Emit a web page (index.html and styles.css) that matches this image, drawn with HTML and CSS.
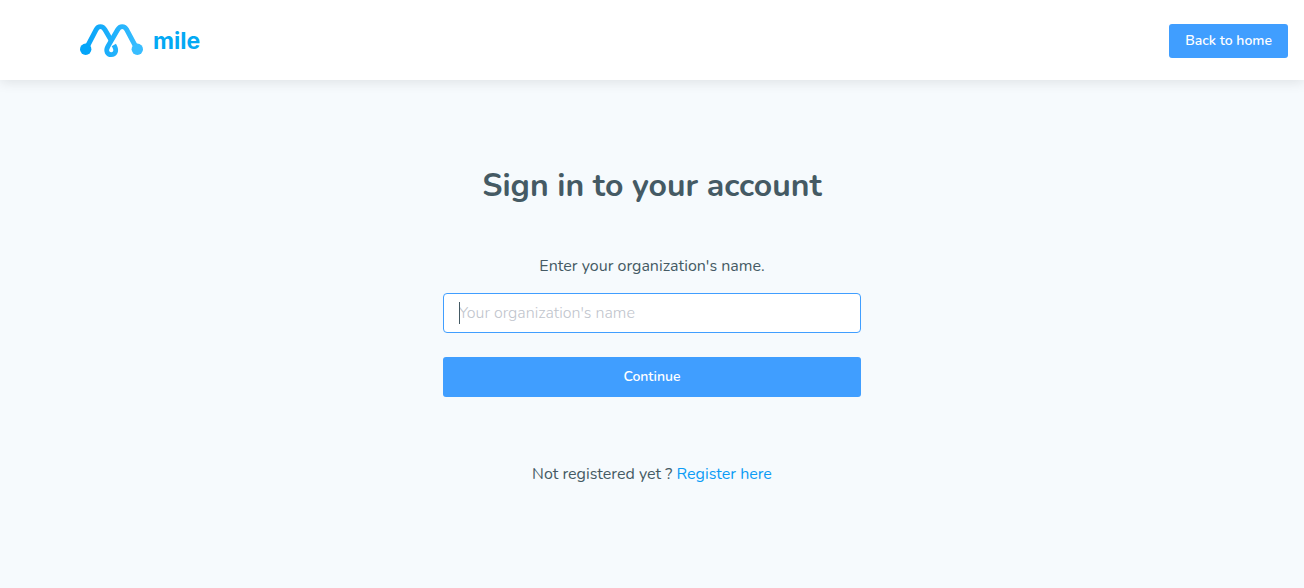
FILE: index.html
```html
<!DOCTYPE html>
<html lang="en">
<head>
<meta charset="utf-8">
<meta name="viewport" content="width=device-width, initial-scale=1">
<title>Sign in - mile</title>
<link rel="stylesheet" href="styles.css">
</head>
<body>
<header class="topbar">
  <a class="brand" href="#">
    <svg class="brand-mark" viewBox="0 1 64 36" aria-hidden="true">
      <defs>
        <linearGradient id="mark" gradientUnits="userSpaceOnUse" x1="0" y1="0" x2="64" y2="0">
          <stop offset="0" stop-color="#03a2f8"/>
          <stop offset="1" stop-color="#3bbfff"/>
        </linearGradient>
      </defs>
      <g fill="none" stroke="url(#mark)" stroke-width="4.9" stroke-linejoin="round">
        <path d="M6 27 L16 7.8 C18.2 3.6 22.6 3.6 25 7.8 L32 19.8"/>
        <path d="M57 27 L46.8 7.8 C44.4 3.6 40 3.6 37.6 7.8 L28 24.2 C25 29.2 27.8 32.6 31.2 32.6 C35.2 32.6 37 28.8 34.6 24.4 L33.8 23"/>
      </g>
      <circle cx="5.7" cy="27.3" r="5.7" fill="#03a5f9"/>
      <circle cx="57.3" cy="27.3" r="5.7" fill="#38bdff"/>
    </svg>
    <span class="brand-name">mile</span>
  </a>
  <button class="button button-home" type="button">Back to home</button>
</header>
<main class="signin">
  <h1 class="title">Sign in to your account</h1>
  <form class="form">
    <label class="label" for="organization">Enter your organization's name.</label>
    <div class="field">
      <input class="input" id="organization" type="text" placeholder="Your organization's name">
      <span class="caret" aria-hidden="true"></span>
    </div>
    <button class="button button-submit" type="button">Continue</button>
  </form>
  <p class="register">Not registered yet ? <a class="link" href="#">Register here</a></p>
</main>
</body>
</html>
```
FILE: styles.css
```css
* {
  box-sizing: border-box;
}

body {
  margin: 0;
  min-height: 100vh;
  background: #f6fafd;
  color: #455a64;
  font-family: Nunito, "Open Sans", "Noto Sans", sans-serif;
  font-size: 16px;
  font-weight: 400;
  line-height: 24px;
}

.topbar {
  display: flex;
  align-items: center;
  justify-content: space-between;
  height: 80px;
  padding: 2px 16px 0 80px;
  background: #fff;
  box-shadow: 0 2px 12px rgba(0, 0, 0, 0.1);
}

.brand {
  display: flex;
  align-items: center;
  gap: 9px;
  color: #03a9f4;
  text-decoration: none;
}

.brand-mark {
  width: 64px;
  height: 36px;
}

.brand-name {
  font-family: Inter, Lato, sans-serif;
  font-size: 23px;
  font-weight: 700;
}

.button {
  border: 0;
  border-radius: 3px;
  background: #409eff;
  color: #fff;
  font-family: inherit;
  font-size: 14px;
  font-weight: 600;
  line-height: 16px;
  cursor: pointer;
}

.button-home {
  height: 34px;
  padding: 0 16px;
}

.button-submit {
  height: 40px;
}

.signin {
  display: flex;
  flex-direction: column;
  align-items: center;
  padding: 80px 8px;
}

.title {
  margin: 0;
  font-size: 32px;
  font-weight: 700;
  line-height: 52px;
}

.form {
  display: flex;
  flex-direction: column;
  width: 32.5%;
  min-width: 280px;
  margin-top: 42px;
}

.label {
  margin-bottom: 15px;
  text-align: center;
}

.field {
  position: relative;
  margin-bottom: 24px;
}

.input {
  display: block;
  width: 100%;
  height: 40px;
  padding: 0 15px;
  border: 1px solid #409eff;
  border-radius: 4px;
  outline: 0;
  background: #fff;
  color: #606266;
  font: inherit;
  font-weight: 300;
}

.input::placeholder {
  color: #c0c4cc;
}

.caret {
  position: absolute;
  top: 9px;
  left: 16px;
  width: 1px;
  height: 22px;
  background: #455a64;
}

.register {
  margin: 65px 0 0;
}

.link {
  color: #0c9cf5;
  text-decoration: none;
}
```
